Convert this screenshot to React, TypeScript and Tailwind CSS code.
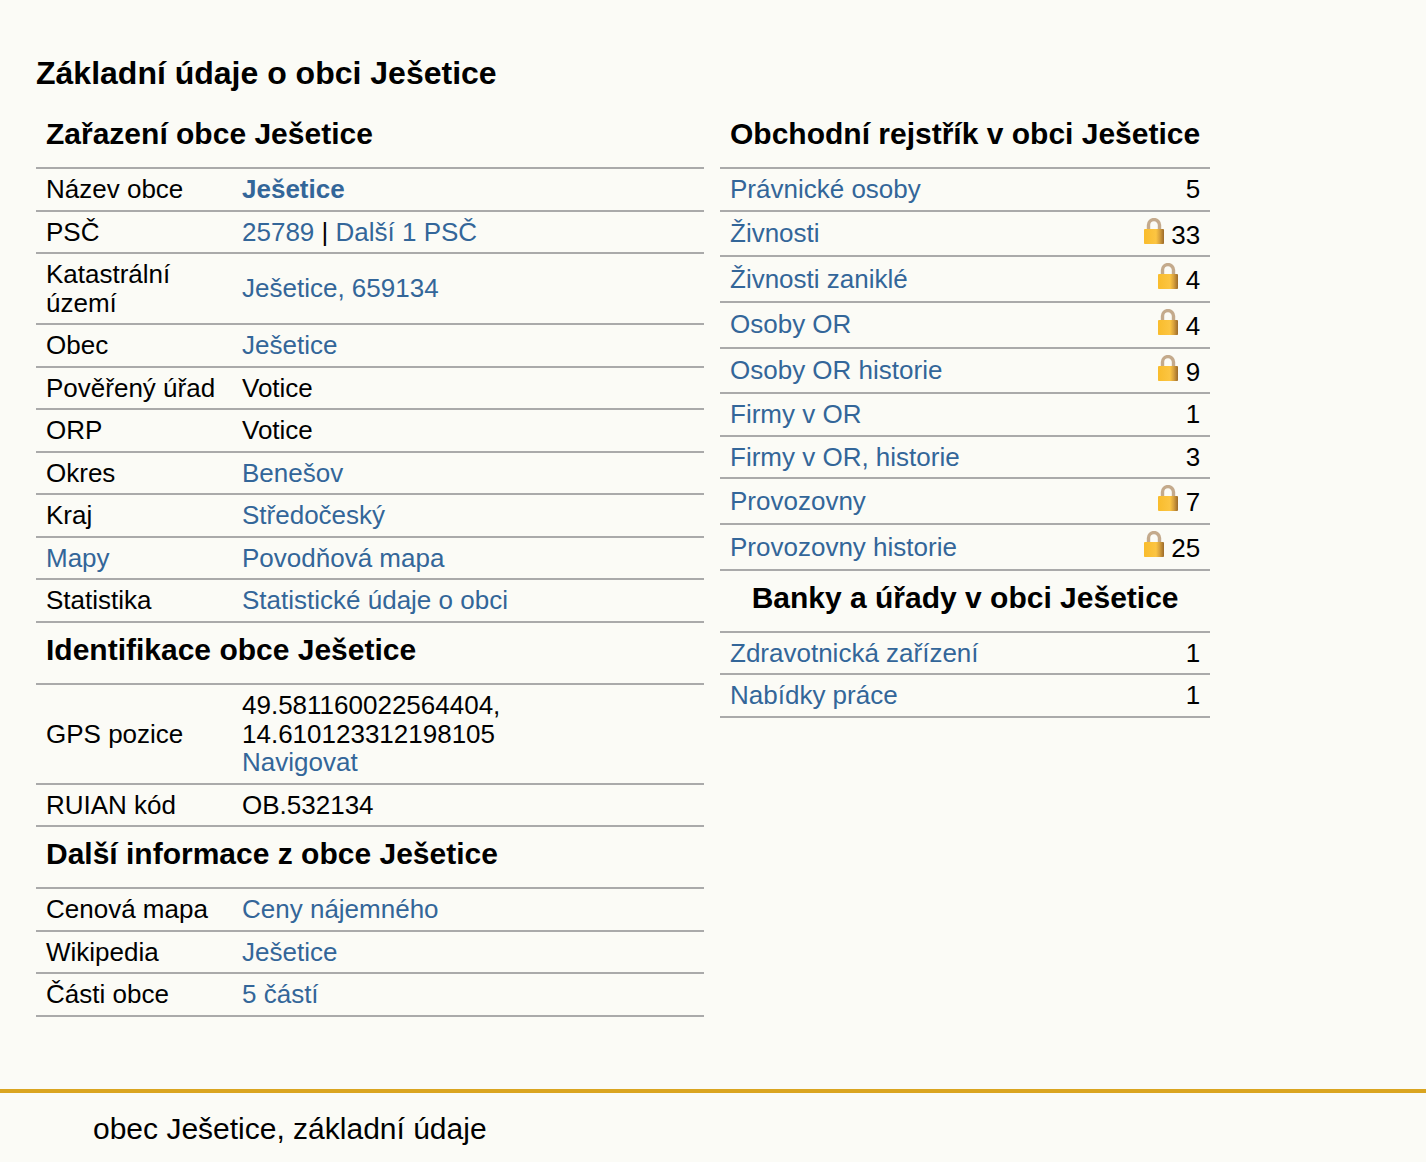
import type { ReactNode } from 'react'

const A = ({ children, bold }: { children: ReactNode; bold?: boolean }) => (
  <a href="#" className={bold ? 'font-bold text-[#336699]' : 'text-[#336699]'}>
    {children}
  </a>
)

// zámeček u placených položek, sedí na účaří jako obrázek
function Lock() {
  return (
    <svg width="20" height="26.15" viewBox="0 0 20 26" className="inline align-baseline">
      <defs>
        <linearGradient id="lockBody" x1="0" x2="1" y1="0" y2="0">
          <stop offset="0" stopColor="#f9bc2c" />
          <stop offset="0.6" stopColor="#fcc542" />
          <stop offset="0.78" stopColor="#d9a23c" />
          <stop offset="1" stopColor="#9c6a2a" />
        </linearGradient>
      </defs>
      <path d="M4.5 12V7a5.5 5.5 0 0 1 11 0V12" fill="none" stroke="#c4aa8c" strokeWidth="3.4" />
      <rect x="0" y="11" width="20" height="15" rx="1" fill="url(#lockBody)" />
    </svg>
  )
}

function Head({ children, center }: { children: ReactNode; center?: boolean }) {
  return (
    <tr className="border-b-2 border-[#aaaaaa]">
      <th
        colSpan={2}
        className={`h-[62px] px-[10px] pb-[6px] text-[30px] leading-[34px] font-bold whitespace-nowrap ${center ? 'text-center' : 'text-left'}`}
      >
        {children}
      </th>
    </tr>
  )
}

function Row({ label, children }: { label: ReactNode; children: ReactNode }) {
  return (
    <tr className="border-b-2 border-[#aaaaaa]">
      <td className="w-[196px] px-[10px] py-[6px] align-middle">{label}</td>
      <td className="px-[10px] py-[6px] align-middle">{children}</td>
    </tr>
  )
}

function Count({ label, n, lock }: { label: string; n: number; lock?: boolean }) {
  return (
    <tr className="border-b-2 border-[#aaaaaa]">
      <td className="px-[10px] py-[6px] align-middle">
        <A>{label}</A>
      </td>
      <td className="px-[10px] py-[6px] text-right align-middle whitespace-nowrap">
        {lock && <Lock />} {n}
      </td>
    </tr>
  )
}

export default function App() {
  return (
    <div className="min-h-[1162px] bg-[#fbfbf6] font-['Liberation_Sans',Arial,sans-serif] text-[26px] leading-[28.55px] text-black">
      <div className="px-[36px] pt-[55px]">
        <h1 className="mb-[15px] text-[32px] leading-[36px] font-bold">Základní údaje o obci Ješetice</h1>
        <div className="flex items-start gap-[16px]">
          <table className="w-[668px] border-collapse">
            <tbody>
              <Head>Zařazení obce Ješetice</Head>
              <Row label="Název obce"><A bold>Ješetice</A></Row>
              <Row label="PSČ"><A>25789</A> | <A>Další 1 PSČ</A></Row>
              <Row label={<>Katastrální<br />území</>}><A>Ješetice, 659134</A></Row>
              <Row label="Obec"><A>Ješetice</A></Row>
              <Row label="Pověřený úřad">Votice</Row>
              <Row label="ORP">Votice</Row>
              <Row label="Okres"><A>Benešov</A></Row>
              <Row label="Kraj"><A>Středočeský</A></Row>
              <Row label={<A>Mapy</A>}><A>Povodňová mapa</A></Row>
              <Row label="Statistika"><A>Statistické údaje o obci</A></Row>
              <Head>Identifikace obce Ješetice</Head>
              <Row label="GPS pozice">
                49.581160022564404,<br />14.610123312198105<br /><A>Navigovat</A>
              </Row>
              <Row label="RUIAN kód">OB.532134</Row>
              <Head>Další informace z obce Ješetice</Head>
              <Row label="Cenová mapa"><A>Ceny nájemného</A></Row>
              <Row label="Wikipedia"><A>Ješetice</A></Row>
              <Row label="Části obce"><A>5 částí</A></Row>
            </tbody>
          </table>
          <table className="w-[490px] border-collapse">
            <tbody>
              <Head center>Obchodní rejstřík v obci Ješetice</Head>
              <Count label="Právnické osoby" n={5} />
              <Count label="Živnosti" n={33} lock />
              <Count label="Živnosti zaniklé" n={4} lock />
              <Count label="Osoby OR" n={4} lock />
              <Count label="Osoby OR historie" n={9} lock />
              <Count label="Firmy v OR" n={1} />
              <Count label="Firmy v OR, historie" n={3} />
              <Count label="Provozovny" n={7} lock />
              <Count label="Provozovny historie" n={25} lock />
              <Head center>Banky a úřady v obci Ješetice</Head>
              <Count label="Zdravotnická zařízení" n={1} />
              <Count label="Nabídky práce" n={1} />
            </tbody>
          </table>
        </div>
      </div>
      <footer className="mt-[72px] border-t-4 border-[#daa520] pt-[19px] pl-[93px] text-[30px] leading-[34px]">
        obec Ješetice, základní údaje
      </footer>
    </div>
  )
}
